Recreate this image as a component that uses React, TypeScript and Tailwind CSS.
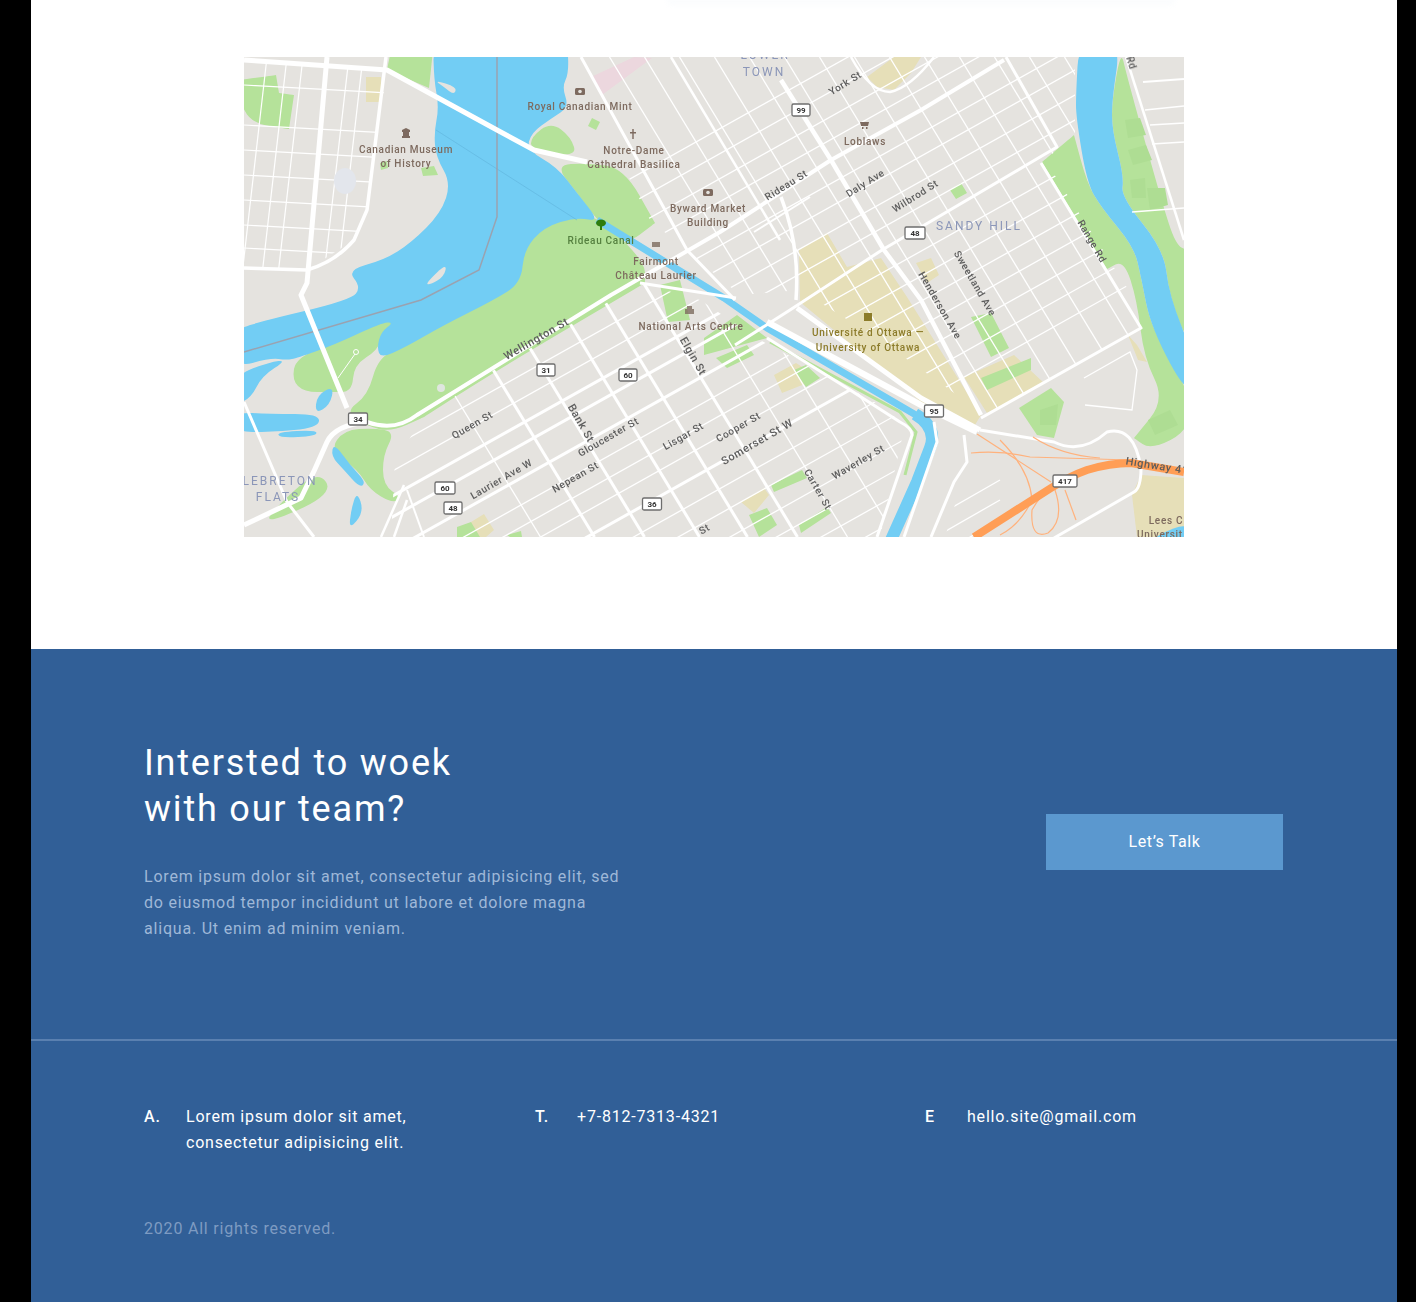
const LAND = "#e5e3df";
const WATER = "#72cdf4";
const GREEN = "#b5e29a";
const BEIGE = "#e6dfb8";
const ORANGE = "#ff9e57";
const BROWN = "#7d6a5e";
const GREY = "#5d5d5d";
const BLUEGREY = "#8b96b8";
const OLIVE = "#8c7b2a";

// street lattice: NE streets y = c - 0.56 * (x - 244), SE streets x = d + y / 1.65
const ne = (c: number) => `M244 ${c} L1184 ${c - 526}`;
const se = (d: number) => `M${d + 34.5} 57 L${d + 325.5} 537`;

// rounds a polygon off so that parks and rivers don't look cut with scissors.
// a point written twice stays a sharp corner
function smooth(points: string) {
  const pts = points.split(" ").map((p) => p.split(",").map(Number));
  const mid = (a: number[], b: number[]) => `${(a[0] + b[0]) / 2} ${(a[1] + b[1]) / 2}`;
  let d = `M${mid(pts[pts.length - 1], pts[0])}`;
  pts.forEach((p, i) => {
    d += ` Q${p[0]} ${p[1]} ${mid(p, pts[(i + 1) % pts.length])}`;
  });
  return d + " Z";
}

const downtownThin = [530, 554, 660, 682, 703, 755, 780, 809, 835, 860, 885];
const downtownThick = [579, 600, 633, 729];
const downtownCrossThin = [215, 522, 570, 620, 665];
const downtownCross = [269, 319, 374, 422, 472];

const eastThin = [395, 420, 445, 468, 512, 535, 560, 585, 630, 655, 680, 705, 730, 755, 780];
const eastCross = [575, 610, 645, 680, 715, 750, 785, 820, 855, 890, 925, 960, 995, 1030, 1065];

const parks = [
  "531,137 551,122 571,137 577,157 531,150",
  "555,165 587,163 624,168 655,223 655,223 625,246 597,220 577,193",
  "600,218 577,215 544,225 522,250 520,283 494,298 444,323 404,346 378,358 368,395 345,412 367,426 391,432 424,417 424,417 494,372 645,283 645,283 645,262",
  "292,380 296,358 334,343 381,321 400,318 383,332 378,350 354,365 352,392 331,392 304,392",
  "330,450 344,430 374,428 395,432 383,455 383,485 402,498 392,503 370,490 358,470",
  "318,470 334,494 262,526 280,503",
  "240,80 240,80 276,75 276,75 279,93 279,93 294,95 294,95 289,129 289,129 254,124 240,105",
  "1074,135 1074,135 1042,162 1042,162 1107,269 1107,269 1124,260 1137,300 1144,358 1165,400 1134,438 1134,438 1151,450 1190,430 1190,392 1151,328 1141,277 1134,247 1101,207 1087,183",
  "1121,50 1126,73 1164,210 1177,247 1190,250 1190,350 1169,295 1164,250 1121,197 1124,177 1112,130 1112,100",
];

const greens = [
  "391,50 433,50 429,88 387,70",
  "704,338 737,315 767,338 704,355",
  "716,358 747,345 754,355 727,368",
  "794,370 806,365 820,378 806,387",
  "771,485 802,470 807,478 774,492",
  "749,515 767,508 777,525 759,537",
  "799,525 827,507 831,513 801,533",
  "457,527 471,522 480,537 457,537",
  "507,535 521,531 522,537 510,537",
  "950,190 961,183 967,193 956,199",
  "971,317 991,313 1009,348 991,357",
  "1019,408 1051,388 1064,402 1054,438 1037,435",
  "660,285 680,280 690,320 668,322",
  "592,118 600,122 596,130 588,126",
  "421,168 434,166 438,175 423,176",
  "380,163 387,161 388,168 381,170",
  "981,378 1031,358 1031,370 987,390",
];

const parkShade = [
  "1125,120 1140,118 1146,135 1128,138",
  "1128,150 1146,145 1152,160 1133,165",
  "1130,180 1145,178 1146,198 1132,198",
  "1147,188 1165,188 1168,205 1150,210",
  "1148,420 1170,410 1178,425 1155,435",
  "1040,410 1058,404 1056,425 1040,425",
];

const beiges = [
  "799,250 827,233 847,267 881,258 907,297 981,415 975,425 921,402 800,302",
  "964,377 1014,355 1044,383 987,413",
  "916,263 931,258 939,275 927,283",
  "867,77 894,57 921,57 911,73 894,90 877,87",
  "366,77 381,77 381,102 366,102",
  "774,375 796,363 820,378 782,393",
  "741,502 764,488 769,495 754,513",
  "471,522 484,514 494,530 486,537 470,537",
  "1132,495 1141,475 1184,478 1184,537 1137,537",
  "1128,335 1137,345 1147,362 1138,360",
];

const rivers = [
  "433,40 567,40 569,73 562,87 569,107 552,118 531,133 527,150 557,167 577,193 600,222 577,217 544,227 524,250 521,283 494,300 444,325 404,348 381,358 377,348 381,332 394,322 381,323 334,345 297,358 287,360 270,358 235,368 235,331 254,323 351,300 361,287 347,270 384,260 411,243 441,213 451,183 436,157 434,133 439,107 434,80",
  "1079,40 1121,40 1112,100 1112,130 1124,177 1121,197 1164,250 1169,295 1195,360 1190,400 1151,328 1141,277 1134,247 1101,207 1087,183 1076,117 1076,93",
  "287,360 262,376 251,398 235,405 235,375 270,362",
  "235,432 235,412 270,414 320,414 318,428 270,432",
  "317,395 334,386 330,405 315,414",
  "277,432 317,430 316,436 280,438",
  "334,443 350,465 366,482 360,488 344,470 331,456",
  "357,491 364,512 349,530 351,510",
  "1157,535 1190,522 1190,545 1150,545",
];

const islands = [
  "426,283 447,263 444,277 429,285",
  "434,80 457,87 454,95 444,87",
];

const thickRoads: [string, number][] = [
  ["M244 60 L387 70 L497 130 L534 150 L587 162", 5],
  ["M327 57 L307 283 L301 295 L347 408", 5],
  ["M386 57 L367 210 L354 240 Q335 262 307 270 L244 268", 3.5],
  ["M367 422 Q395 432 417 415 L611 295 L720 232 L831 160 L921 110 L1004 60", 4],
  ["M244 525 L301 498 Q315 470 327 442 Q335 425 367 422", 5],
  ["M244 402 L287 502 L314 537", 3],
  ["M781 80 L831 160 L884 250 L921 300 L981 415", 4.5],
  ["M735 345 L790 310 L882 250 L1057 147 L1006 57", 3],
  ["M981 418 L1141 328 L1041 163", 3],
  ["M767 322 L921 405 L977 432", 6],
  ["M797 308 L921 398 L980 430", 5],
  ["M980 430 L1054 442 Q1081 455 1107 432 Q1134 425 1141 468 Q1141 488 1134 492 L1054 538", 3],
  ["M877 537 L912 435 Q912 428 900 422 L847 388 L767 338", 3],
  ["M904 537 L937 442 L934 422", 3],
  ["M931 537 L954 482 L967 462 L964 435", 3],
  ["M1126 57 L1184 240", 2.5],
  ["M671 57 L780 240", 2.5],
  ["M781 197 Q800 245 796 300", 3.5],
  ["M754 232 L810 197", 2],
  ["M581 57 L687 250 L735 300", 3],
  ["M640 283 L736 298", 3],
  ["M851 57 Q870 92 890 92 Q910 88 934 57", 2.5],
  ["M381 537 L404 485", 2.5],
  ["M394 537 L407 500", 2.5],
  ["M424 537 L407 490", 2],
];

const streetLabels: [string, number, number, number, number?][] = [
  ["York St", 847, 86, -32],
  ["Rideau St", 788, 188, -32],
  ["Daly Ave", 867, 186, -32],
  ["Wilbrod St", 917, 199, -32],
  ["Sweetland Ave", 972, 285, 60],
  ["Henderson Ave", 937, 307, 60],
  ["Range Rd", 1089, 243, 60],
  ["Rd", 1128, 64, 72],
  ["Wellington St", 538, 342, -30, 11],
  ["Elgin St", 690, 358, 60, 11],
  ["Queen St", 474, 428, -30],
  ["Bank St", 578, 425, 60, 11],
  ["Gloucester St", 610, 440, -30],
  ["Lisgar St", 685, 439, -30],
  ["Cooper St", 740, 430, -30],
  ["Somerset St W", 759, 445, -30, 11],
  ["Laurier Ave W", 503, 482, -30],
  ["Nepean St", 577, 480, -30],
  ["Carter St", 815, 491, 60],
  ["Waverley St", 860, 465, -30],
  ["Highway 417", 1160, 470, 9, 11],
  ["St", 706, 532, -30],
];

const poiLabels: [string, number, number, string][] = [
  ["Royal Canadian Mint", 580, 110, BROWN],
  ["Canadian Museum", 406, 153, BROWN],
  ["of History", 406, 167, BROWN],
  ["Notre-Dame", 634, 154, BROWN],
  ["Cathedral Basilica", 634, 168, BROWN],
  ["Byward Market", 708, 212, BROWN],
  ["Building", 708, 226, BROWN],
  ["Rideau Canal", 601, 244, "#55803f"],
  ["Fairmont", 656, 265, BROWN],
  ["Château Laurier", 656, 279, BROWN],
  ["National Arts Centre", 691, 330, BROWN],
  ["Loblaws", 865, 145, BROWN],
  ["Université d Ottawa —", 868, 336, OLIVE],
  ["University of Ottawa", 868, 351, OLIVE],
  ["Lees C", 1166, 524, BROWN],
  ["Universit", 1160, 538, BROWN],
];

const areaLabels: [string, number, number][] = [
  ["LOWER", 765, 59],
  ["TOWN", 764, 76],
  ["SANDY HILL", 979, 230],
  ["LEBRETON", 280, 485],
  ["FLATS", 278, 501],
];

const shields: [string, number, number, number][] = [
  ["99", 801, 110, 18],
  ["48", 915, 233, 20],
  ["31", 546, 370, 18],
  ["60", 628, 375, 18],
  ["34", 358, 419, 19],
  ["60", 445, 488, 20],
  ["48", 453, 508, 18],
  ["36", 652, 504, 19],
  ["95", 934, 411, 19],
  ["417", 1065, 481, 24],
];

function CityMap() {
  return (
    <svg viewBox="244 57 940 480" className="block h-[480px] w-[940px]">
      <defs>
        <clipPath id="downtown">
          <polygon points="391,537 395,460 424,417 494,370 640,283 700,300 760,340 880,405 905,425 880,537" />
        </clipPath>
        <clipPath id="east">
          <polygon points="583,57 1075,57 1075,135 1045,160 1135,300 1140,330 985,415 880,340 800,290 740,295 650,220 625,170 600,130 575,85" />
        </clipPath>
        <clipPath id="hull">
          <polygon points="244,60 387,70 367,210 354,240 307,270 244,268" />
        </clipPath>
        <clipPath id="southeast">
          <polygon points="945,537 975,440 1184,470 1184,537" />
        </clipPath>
        <filter id="soft" x="0" y="0" width="100%" height="100%">
          <feGaussianBlur stdDeviation="0.75" />
        </filter>
        <filter id="softText" x="-5%" y="-5%" width="110%" height="110%">
          <feGaussianBlur stdDeviation="0.45" />
        </filter>
      </defs>

      <rect x="244" y="57" width="940" height="480" fill={LAND} />

      <g filter="url(#soft)">
        <polygon points="591,77 634,57 652,58 602,95" fill="#ecd7de" />
        {beiges.map((p) => (
          <polygon key={p} points={p} fill={BEIGE} />
        ))}
        {parks.map((p) => (
          <path key={p} d={smooth(p)} fill={GREEN} />
        ))}
        {greens.map((p) => (
          <polygon key={p} points={p} fill={GREEN} />
        ))}
        {parkShade.map((p) => (
          <polygon key={p} points={p} fill="#aedd93" />
        ))}
        <polyline points="770,342 900,412 916,432 905,475" fill="none" stroke={GREEN} strokeWidth="3" />
        {rivers.map((p) => (
          <path key={p} d={smooth(p)} fill={WATER} />
        ))}
        {islands.map((p) => (
          <path key={p} d={smooth(p)} fill={LAND} />
        ))}
        <polyline
          points="597,220 724,298 767,328 921,418"
          fill="none"
          stroke={WATER}
          strokeWidth="7"
          strokeLinejoin="round"
        />
        <path d="M915 414 Q938 428 930 448 L917 482 L891 540" fill="none" stroke={WATER} strokeWidth="12" />
        <polyline points="436,130 577,220" fill="none" stroke="#5fb3dc" strokeWidth="0.6" />
        <polyline points="497,57 497,217 479,270 421,300 244,352" fill="none" stroke="#9aa2b0" strokeWidth="1.5" />

        <g clipPath="url(#downtown)" stroke="#ffffff" fill="none">
          {downtownThin.map((c) => (
            <path key={c} d={ne(c)} strokeWidth="1.3" />
          ))}
          {downtownThick.map((c) => (
            <path key={c} d={ne(c)} strokeWidth="3" />
          ))}
          {downtownCrossThin.map((d) => (
            <path key={d} d={se(d)} strokeWidth="1.3" />
          ))}
          {downtownCross.map((d) => (
            <path key={d} d={se(d)} strokeWidth="3" />
          ))}
        </g>

        <g clipPath="url(#east)" stroke="#ffffff" fill="none" strokeWidth="1.3">
          {eastThin.map((c) => (
            <path key={c} d={ne(c)} />
          ))}
          {eastCross.map((d) => (
            <path key={d} d={se(d)} />
          ))}
        </g>

        <g clipPath="url(#hull)" stroke="#ffffff" fill="none" strokeWidth="1.2">
          {[262, 282, 298, 344, 358].map((x) => (
            <path key={x} d={`M${x + 5} 57 L${x - 20} 275`} />
          ))}
          {[85, 125, 150, 175, 200, 225, 248].map((y) => (
            <path key={y} d={`M244 ${y} L390 ${y + 8}`} />
          ))}
        </g>

        <g clipPath="url(#southeast)" stroke="#ffffff" fill="none" strokeWidth="1.3">
          {[480, 500, 520].map((y) => (
            <path key={y} d={`M930 ${y + 40} L1000 ${y}`} />
          ))}
        </g>

        {/* east bank of the Rideau river */}
        <g stroke="#ffffff" fill="none" strokeWidth="1.3">
          <path d="M1145 110 L1184 106" />
          <path d="M1143 82 L1184 79" strokeWidth="2" />
          <path d="M1150 125 L1184 123" />
          <path d="M1152 144 L1184 142" />
          <path d="M1132 212 L1184 208" />
          <path d="M1084 378 L1130 352 L1137 370 L1132 410 L1085 405" />
        </g>

        {thickRoads.map(([d, w]) => (
          <path key={d} d={d} fill="none" stroke="#ffffff" strokeWidth={w} strokeLinejoin="round" />
        ))}

        <circle cx="441" cy="388" r="4" fill="#dfe6df" />
        <circle cx="356" cy="352" r="2.5" fill="none" stroke="#ffffff" />
        <path d="M355 354 L338 378" stroke="#ffffff" fill="none" />
        <ellipse cx="345" cy="181" rx="11" ry="13" fill="#e3e6ec" />

        <g fill="none" stroke="#ffb27d" strokeLinejoin="round" strokeWidth="1.2">
          <path d="M977 434 L1051 482" />
          <path d="M971 453 Q1000 450 1030 457 L1130 460" />
          <path d="M1033 437 Q1060 455 1100 458" />
          <path d="M1000 440 Q1030 470 1032 500 Q1020 525 1000 535" />
          <path d="M1055 490 Q1065 520 1048 533 Q1030 540 1032 510 Q1040 495 1051 490" />
          <path d="M1065 490 L1076 520" />
        </g>
        <path
          d="M974 537 L1051 488 Q1070 476 1087 470 Q1110 463 1131 463 L1184 472"
          fill="none"
          stroke={ORANGE}
          strokeWidth="8"
          strokeLinejoin="round"
        />
      </g>

      <g filter="url(#softText)" fontFamily="Roboto, sans-serif">
        {poiLabels.map(([t, x, y, fill]) => (
          <text key={t} x={x} y={y} fill={fill} fontSize="10" letterSpacing="0.7" textAnchor="middle" fontWeight="500">
            {t}
          </text>
        ))}
        {streetLabels.map(([t, x, y, r, size]) => (
          <text
            key={t}
            x={x}
            y={y}
            fill={GREY}
            fontSize={size ?? 10}
            letterSpacing="0.6"
            textAnchor="middle"
            fontWeight="500"
            transform={`rotate(${r} ${x} ${y})`}
          >
            {t}
          </text>
        ))}
        {areaLabels.map(([t, x, y]) => (
          <text key={t} x={x} y={y} fill={BLUEGREY} fontSize="12" letterSpacing="2" textAnchor="middle">
            {t}
          </text>
        ))}

        {shields.map(([t, x, y, w]) => (
          <g key={t + x}>
            <rect x={x - w / 2} y={y - 6} width={w} height="12" rx="1.5" fill="#ffffff" stroke="#6d6d6d" strokeWidth="1.3" />
            <text x={x} y={y + 3} fill="#333333" fontSize="8" fontWeight="700" textAnchor="middle">
              {t}
            </text>
          </g>
        ))}

        {/* poi markers */}
        <rect x="575" y="88" width="10" height="7" rx="1.5" fill={BROWN} />
        <circle cx="580" cy="91.5" r="1.8" fill="#e5e3df" />
        <rect x="703" y="189" width="10" height="7" rx="1.5" fill={BROWN} />
        <circle cx="708" cy="192.5" r="1.8" fill="#e5e3df" />
        <path d="M406 128 l4 2 v2 h-1 v4 h1 v2 h-8 v-2 h1 v-4 h-1 v-2 z" fill={BROWN} />
        <path d="M632.3 129 h1.4 v3 h2.3 v1.4 h-2.3 v5.6 h-1.4 v-5.6 h-2.3 v-1.4 h2.3 z" fill={BROWN} />
        <path d="M860 122 h9 l-1 4 h-7 z M862 127 h1.5 v2 h-1.5 z M866 127 h1.5 v2 h-1.5 z" fill={BROWN} />
        <path d="M652 242 h8 v5 h-8 z" fill={BROWN} opacity="0.8" />
        <path d="M685 309 h9 v5 h-9 z M687 306 h5 v3 h-5 z" fill={BROWN} opacity="0.8" />
        <rect x="864" y="313" width="8" height="8" fill={OLIVE} />
        <ellipse cx="601" cy="223" rx="5" ry="3.5" fill="#2e7d0f" />
        <rect x="600" y="225" width="2" height="5" fill="#2e7d0f" />
      </g>
    </svg>
  );
}

function ContactItem({ label, children }: { label: string; children: React.ReactNode }) {
  return (
    <div className="flex text-white">
      <span className="w-[42px] shrink-0 font-medium">{label}</span>
      <span>{children}</span>
    </div>
  );
}

export default function App() {
  return (
    <div className="min-h-[1302px] bg-black pl-[31px] pr-[19px] font-['Roboto',sans-serif]">
      <section className="relative bg-white pb-[112px] pt-[57px]">
        <div className="absolute left-[640px] top-0 h-px w-[500px] bg-[#fcfdfe] shadow-[0_0_6px_3px_rgba(240,245,250,0.4)]" />
        <div className="mx-auto w-[940px]">
          <CityMap />
        </div>
      </section>

      <footer className="h-[653px] bg-[#315f97] tracking-[0.8px]">
        <div className="flex items-center justify-between pb-[97px] pl-[113px] pr-[114px] pt-[91px]">
          <div>
            <h2 className="text-[36px] font-normal leading-[46px] tracking-[1.8px] text-white">
              Intersted to woek
              <br />
              with our team?
            </h2>
            <p className="mt-8 w-[490px] text-base leading-[26px] text-[#9fb8d8]">
              Lorem ipsum dolor sit amet, consectetur adipisicing elit, sed do eiusmod tempor incididunt ut labore et
              dolore magna aliqua. Ut enim ad minim veniam.
            </p>
          </div>
          <button className="mt-0.5 h-14 w-[237px] bg-[#5b98cf] text-base tracking-[0.6px] text-white">Let’s Talk</button>
        </div>

        <div className="h-0.5 bg-[#5a80b0]" />

        <div className="pl-[113px] pt-[63px] text-base leading-[26px]">
          <div className="grid h-[52px] grid-cols-[391px_390px_1fr]">
            <ContactItem label="A.">
              Lorem ipsum dolor sit amet,
              <br />
              consectetur adipisicing elit.
            </ContactItem>
            <ContactItem label="T.">+7-812-7313-4321</ContactItem>
            <ContactItem label="E">hello.site@gmail.com</ContactItem>
          </div>
          <p className="mt-[60px] text-[#7e9bc2]">2020 All rights reserved.</p>
        </div>
      </footer>
    </div>
  );
}
